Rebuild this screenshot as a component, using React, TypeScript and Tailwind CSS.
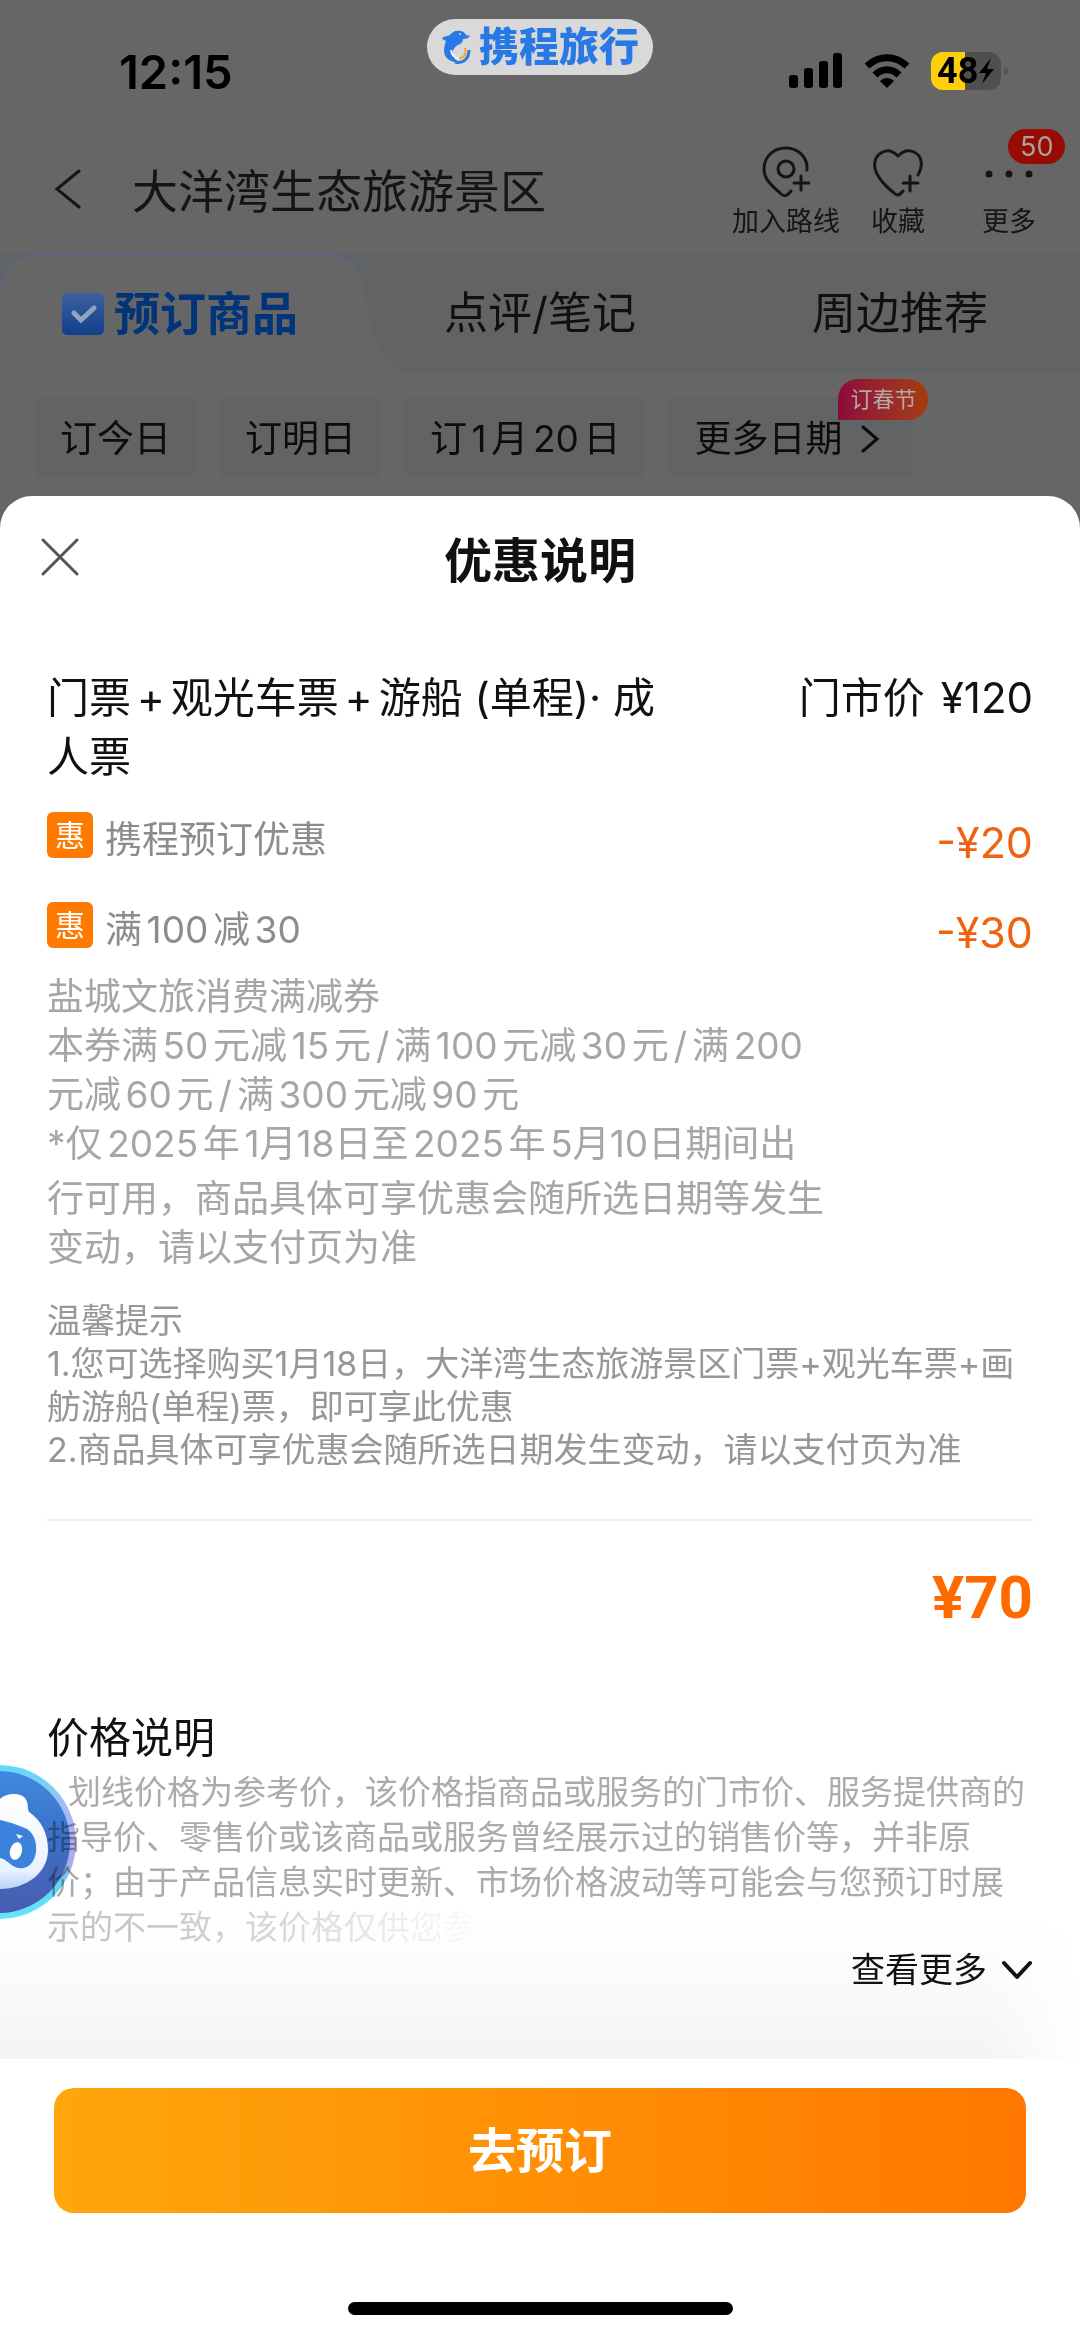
import React, { useState } from "react";
import clsx from "clsx";

interface Discount {
  id: string;
  label: string;
  amount: string;
}

const TABS = ["预订商品", "点评/笔记", "周边推荐"];

const DATES = ["订今日", "订明日", "订1月20日"];

const DISCOUNTS: Discount[] = [
  { id: "ctrip", label: "携程预订优惠", amount: "-¥20" },
  { id: "coupon", label: "满100减30", amount: "-¥30" },
];

const StatusBar = () => (
  <div className="grid grid-cols-[1fr_auto_1fr] items-start pt-[19px] text-black">
    <span className="pt-7 pl-[119px] text-[47px] leading-[50px] font-semibold">12:15</span>
    <div className="flex h-14 items-center gap-2 rounded-full bg-[#d9d9d9] px-[14px] text-[#2878e6]">
      <svg viewBox="0 0 30 34" className="h-[34px] w-[30px]" aria-hidden="true">
        <path
          d="M1 8 C4 6 7 6 9 5 C11 2 15 0 19 1 C22 1 24 3 25 5 L29 6 C28 8 25 9 22 9 C22 12 20 14 17 15 C13 17 11 21 12 25 C13 29 16 31 18 32 C10 33 3 28 3 21 C3 17 4 14 5 11 C4 10 2 10 1 8 Z"
          fill="currentColor"
        />
        <path d="M10 20 C11 27 16 29 21 28" fill="none" stroke="#eef4ff" strokeWidth="2" />
        <path d="M14 32 C22 34 28 29 28 20" fill="none" stroke="currentColor" strokeWidth="3" />
        <path d="M18 28 C23 28 26 24 24 18" fill="none" stroke="#f5a623" strokeWidth="2" />
        <circle cx="19" cy="4" r="1" fill="#d9d9d9" />
      </svg>
      <span className="text-[40px] leading-none font-black">携程旅行</span>
    </div>
    <div className="flex items-center justify-end gap-[21px] pt-[33px] pr-[72px]">
      <svg viewBox="0 0 54 36" className="h-9 w-[54px]" aria-hidden="true">
        <rect x="0" y="22" width="9" height="13" rx="3" />
        <rect x="15" y="15" width="9" height="20" rx="3" />
        <rect x="30" y="8" width="9" height="27" rx="3" />
        <rect x="44" y="0" width="9" height="35" rx="3" />
      </svg>
      <svg viewBox="0 0 46 36" className="h-9 w-[46px]" aria-hidden="true">
        <path d="M3 13 C15 2 31 2 43 13" fill="none" stroke="currentColor" strokeWidth="7" />
        <path d="M11 22 C18 15 28 15 35 22" fill="none" stroke="currentColor" strokeWidth="7" />
        <path d="M16 28 C20 24 26 24 30 28 L23 35 Z" />
      </svg>
      <div className="flex items-center gap-[3px]">
        <div className="flex h-[38px] w-[70px] items-center rounded-[12px] bg-[linear-gradient(to_right,#ffcf0a_48%,#4f4f4f_48%)] pl-[6px]">
          <span className="font-[Roboto,sans-serif] text-[36px] leading-none font-bold">48</span>
          <svg viewBox="0 0 17 26" className="h-[26px] w-[17px]" aria-hidden="true">
            <path d="M13 0 L1 15 H8 L4 26 L16 11 H9 Z" />
          </svg>
        </div>
        <div className="h-2 w-1 rounded-r-full bg-[#555]" />
      </div>
    </div>
  </div>
);

const NavBar = () => (
  <header className="flex items-center pt-[49px] pr-[44px] pb-[13px] pl-[54px] text-[#151515]">
    <button type="button" aria-label="返回" className="pb-2">
      <svg viewBox="0 0 28 40" className="h-10 w-7" fill="none" stroke="currentColor" strokeWidth="3" strokeLinecap="round">
        <path d="M25 2 L3 20 L25 38" />
      </svg>
    </button>
    <h1 className="flex-1 pb-1 pl-[50px] text-[46px] leading-[54px]">大洋湾生态旅游景区</h1>
    <div className="flex gap-[31px] text-[27px] leading-9">
      <button type="button" className="flex flex-col items-center gap-[6px]">
        <svg viewBox="0 0 48 52" className="h-[52px] w-12" fill="none" stroke="currentColor" strokeWidth="3" strokeLinecap="round" strokeLinejoin="round">
          <path d="M45 24 C46 11 36 2 24 2 C11 2 2 11 2 23 C2 33 9 39 18 47 C22 51 24 51 29 45" />
          <circle cx="24" cy="23" r="8" />
          <path d="M39 30 V44 M32 37 H47" />
        </svg>
        加入路线
      </button>
      <button type="button" className="flex flex-col items-center gap-[6px]">
        <svg viewBox="0 0 50 52" className="h-[52px] w-[50px]" fill="none" stroke="currentColor" strokeWidth="3" strokeLinecap="round" strokeLinejoin="round">
          <path d="M45 29 C50 21 50 10 41 6 C35 3 29 6 25 10 C20 5 14 3 8 7 C1 11 0 21 4 28 C8 36 16 43 21 47 C24 50 26 50 30 45" />
          <path d="M37 30 V45 M30 37 H45" />
        </svg>
        收藏
      </button>
      <button type="button" className="relative ml-[26px] flex flex-col items-center gap-[6px]">
        <svg viewBox="0 0 50 52" className="h-[52px] w-[50px]" fill="currentColor">
          <circle cx="5" cy="28" r="3.5" />
          <circle cx="25" cy="28" r="3.5" />
          <circle cx="45" cy="28" r="3.5" />
        </svg>
        更多
        <span className="absolute -top-[17px] left-[26px] rounded-full bg-[#970c02] px-3 text-[27px] leading-[35px] text-[#a9a09f]">
          50
        </span>
      </button>
    </div>
  </header>
);

const ProductTabs = () => {
  const [active, setActive] = useState(TABS[0]);

  return (
    <nav className="grid grid-cols-3 bg-[#616365] text-[44px] leading-[61px] text-[#101010]">
      {TABS.map((tab, index) => (
        <button
          key={tab}
          type="button"
          onClick={() => setActive(tab)}
          className="relative flex items-center justify-center gap-[10px] pt-[30px] pb-[28px]"
        >
          {index === 0 && (
            <>
              <svg viewBox="0 0 400 119" preserveAspectRatio="none" className="absolute top-0 left-0 h-full w-[112%]" aria-hidden="true">
                <path d="M0 30 C6 12 18 1 34 1 H330 C350 1 358 16 362 40 C368 80 372 105 400 119 H0 Z" fill="#666" />
                <path d="M0 30 C6 12 18 1 34 1 H330 C342 1 352 8 356 20" fill="none" stroke="#5a6380" strokeWidth="2" />
              </svg>
              <svg viewBox="0 0 42 42" className="relative h-[42px] w-[42px]" aria-hidden="true">
                <linearGradient id="tick" x1="0" y1="0" x2="0" y2="1">
                  <stop offset="0" stopColor="#3c619d" />
                  <stop offset="1" stopColor="#123f8c" />
                </linearGradient>
                <rect width="42" height="42" rx="5" fill="url(#tick)" />
                <path d="M12 20 L19 27 L32 15" fill="none" stroke="#93a3bd" strokeWidth="5" strokeLinecap="round" />
              </svg>
            </>
          )}
          <span className={clsx("relative", active === tab && "text-[46px] font-bold text-[#02347a]")}>{tab}</span>
        </button>
      ))}
    </nav>
  );
};

const DateChips = () => (
  <div className="flex gap-[22px] px-[34px] pt-[25px] pb-[18px] text-[37px] leading-[51px] whitespace-nowrap text-[#0c0c0c] [text-autospace:normal]">
    {DATES.map((date) => (
      <button key={date} type="button" className="rounded-[8px] bg-[#616365] px-[26px] pt-4 pb-[14px]">
        {date}
      </button>
    ))}
    <button type="button" className="relative flex items-center gap-[18px] rounded-[8px] bg-[#616365] pt-4 pr-[31px] pb-[14px] pl-[26px]">
      更多日期
      <svg viewBox="0 0 20 28" className="h-7 w-5" fill="none" stroke="currentColor" strokeWidth="3" strokeLinecap="round">
        <path d="M3 2 L17 14 L3 26" />
      </svg>
      <span className="absolute -top-[18px] left-[170px] rounded-[20px] rounded-bl-none bg-gradient-to-r from-[#8d0838] to-[#a43c08] px-3 text-[22px] leading-[41px] text-[#b7a9a9]">
        订春节
      </span>
    </button>
  </div>
);

const DiscountList = () => (
  <ul className="mt-[26px] flex flex-col gap-[30px]">
    {DISCOUNTS.map((item) => (
      <li key={item.id} className="flex items-start justify-between">
        <div className="flex items-start gap-3 text-[37px] leading-[56px] text-[#8c8c8c] [text-autospace:normal]">
          <span className="rounded-[6px] bg-[#ff7a00] px-2 text-[30px] leading-[46px] text-white">惠</span>
          {item.label}
        </div>
        <span className="text-[43px] leading-[60px] text-[#ee6310]">{item.amount}</span>
      </li>
    ))}
  </ul>
);

// Floating assistant, docked half off the left edge
const AssistantBall = () => (
  <button type="button" aria-label="智能助手" className="absolute top-[52px] left-0">
    <svg viewBox="0 0 77 154" className="h-[154px] w-[77px]" aria-hidden="true">
      <defs>
        <linearGradient id="rim" x1="0" y1="0" x2="0" y2="1">
          <stop offset="0" stopColor="#5fdcf8" />
          <stop offset="0.3" stopColor="#a9b8f4" />
          <stop offset="0.6" stopColor="#b6a6ee" />
          <stop offset="0.8" stopColor="#5fd8f5" />
          <stop offset="1" stopColor="#66e4ff" />
        </linearGradient>
        <linearGradient id="ball" x1="0" y1="0" x2="0" y2="1">
          <stop offset="0" stopColor="#3f8ae0" />
          <stop offset="0.5" stopColor="#3a6fc4" />
          <stop offset="1" stopColor="#4a5cb0" />
        </linearGradient>
        <linearGradient id="face" x1="0" y1="0" x2="0" y2="1">
          <stop offset="0" stopColor="#ffffff" />
          <stop offset="0.8" stopColor="#eaf2ff" />
          <stop offset="1" stopColor="#b9d2f7" />
        </linearGradient>
      </defs>
      <circle cx="-1" cy="77" r="77" fill="url(#rim)" />
      <circle cx="-1" cy="77" r="71" fill="url(#ball)" />
      <path d="M0 34 C6 28 20 27 25 33 C29 38 27 43 29 47 C41 55 48 68 48 85 C48 108 26 124 0 124 Z" fill="url(#face)" />
      <path d="M0 55 C10 57 18 60 27 64 C34 69 37 77 36 87 C34 101 24 106 15 102 C9 99 6 94 0 93 Z" fill="#3b82dc" />
      <ellipse cx="16" cy="86" rx="6" ry="9" fill="#fff" transform="rotate(15 16 86)" />
      <path d="M16 69 L23 71 L19 74 Z" fill="#fff" />
    </svg>
  </button>
);

const PriceNotes = () => {
  const [expanded, setExpanded] = useState(false);

  return (
    <section className="relative mt-[83px] flex flex-col bg-[linear-gradient(to_left,white,transparent_95px),linear-gradient(to_bottom,white_60%,#f4f4f4)] px-[47px] pb-[69px]">
      <AssistantBall />
      <h3 className="text-[42px] leading-[50px] text-[#111]">价格说明</h3>
      <p className="relative mt-[7px] text-[33px] leading-[45px] text-[#ababab] mix-blend-multiply">
        <span className="block pl-[21px] whitespace-nowrap">划线价格为参考价，该价格指商品或服务的门市价、服务提供商的</span>
        <span className="block">指导价、零售价或该商品或服务曾经展示过的销售价等，并非原</span>
        <span className="block">价；由于产品信息实时更新、市场价格波动等可能会与您预订时展</span>
        <span className={clsx("block", !expanded && "[mask-image:linear-gradient(to_right,rgba(0,0,0,.75),rgba(0,0,0,.45)_240px,transparent_450px)]")}>
          示的不一致，该价格仅供您参
        </span>
      </p>
      <button
        type="button"
        aria-expanded={expanded}
        onClick={() => setExpanded(!expanded)}
        className="flex items-center gap-[14px] self-end text-[34px] leading-10 text-[#111]"
      >
        查看更多
        <svg viewBox="0 0 32 20" className="h-5 w-8" fill="none" stroke="currentColor" strokeWidth="4" strokeLinecap="round" strokeLinejoin="round">
          <path d="M3 3 L16 17 L29 3" />
        </svg>
      </button>
    </section>
  );
};

export default function App() {
  return (
    <div className="flex min-h-screen flex-col bg-[#666] font-[Inter,'Noto_Sans_CJK_SC',sans-serif]">
      <StatusBar />
      <NavBar />
      <ProductTabs />
      <DateChips />

      {/* Bottom sheet */}
      <main className="flex flex-1 flex-col rounded-t-[32px] bg-white">
        <div className="grid grid-cols-[1fr_auto_1fr] items-center px-10 pt-[35px] pb-[77px]">
          <button type="button" aria-label="关闭" className="justify-self-start pb-2">
            <svg viewBox="0 0 40 40" className="h-10 w-10" fill="none" stroke="#555" strokeWidth="3" strokeLinecap="round">
              <path d="M3 3 L37 37 M37 3 L3 37" />
            </svg>
          </button>
          <h2 className="text-[48px] leading-[60px] font-bold text-[#111]">优惠说明</h2>
        </div>

        <div className="px-[47px]">
          <div className="flex items-start justify-between text-[42px] leading-[59px] text-[#111]">
            <p>
              门票<span className="px-[6px]">+</span>观光车票<span className="px-[6px]">+</span>游船 (单程)· 成
              <br />
              人票
            </p>
            <p className="flex gap-4 whitespace-nowrap">
              <span>门市价</span>
              <span>¥120</span>
            </p>
          </div>

          <DiscountList />

          <div className="mt-[10px] text-[37px] leading-[49px] text-[#a6a6a6] [text-autospace:normal]">
            <p>
              盐城文旅消费满减券
              <br />
              本券满50元减15元<span className="px-[5px]">/</span>满100元减30元<span className="px-[5px]">/</span>满200
              <br />
              元减60元<span className="px-[5px]">/</span>满300元减90元
              <br />
              *仅2025年1<span className="[text-autospace:no-autospace]">月18日</span>至2025年5
              <span className="[text-autospace:no-autospace]">月10日</span>期间出
            </p>
            <p className="mt-[6px]">
              行可用，商品具体可享优惠会随所选日期等发生
              <br />
              变动，请以支付页为准
            </p>
          </div>

          <div className="mt-[27px] text-[34px] leading-[43px] text-[#979797] [text-autospace:no-autospace]">
            <h3>温馨提示</h3>
            <p>
              1.您可选择购买1月18日，大洋湾生态旅游景区门票+观光车票+画
              <br />
              舫游船(单程)票，即可享此优惠
            </p>
            <p>2.商品具体可享优惠会随所选日期发生变动，请以支付页为准</p>
          </div>

          <hr className="mt-12 border-t-2 border-[#eee]" />

          <p className="mt-[45px] text-right font-[Roboto,sans-serif] text-[60px] leading-[64px] font-bold text-[#ff6a00]">¥70</p>
        </div>

        <PriceNotes />

        <footer className="mt-auto bg-white px-[54px] pt-[29px] pb-[23px]">
          <button
            type="button"
            className="w-full rounded-[20px] bg-gradient-to-r from-[#ffa60c] to-[#ff7700] py-8 text-[48px] leading-[61px] font-bold text-white"
          >
            去预订
          </button>
          <div className="mx-auto mt-[89px] h-[13px] w-[385px] rounded-full bg-black" />
        </footer>
      </main>
    </div>
  );
}
